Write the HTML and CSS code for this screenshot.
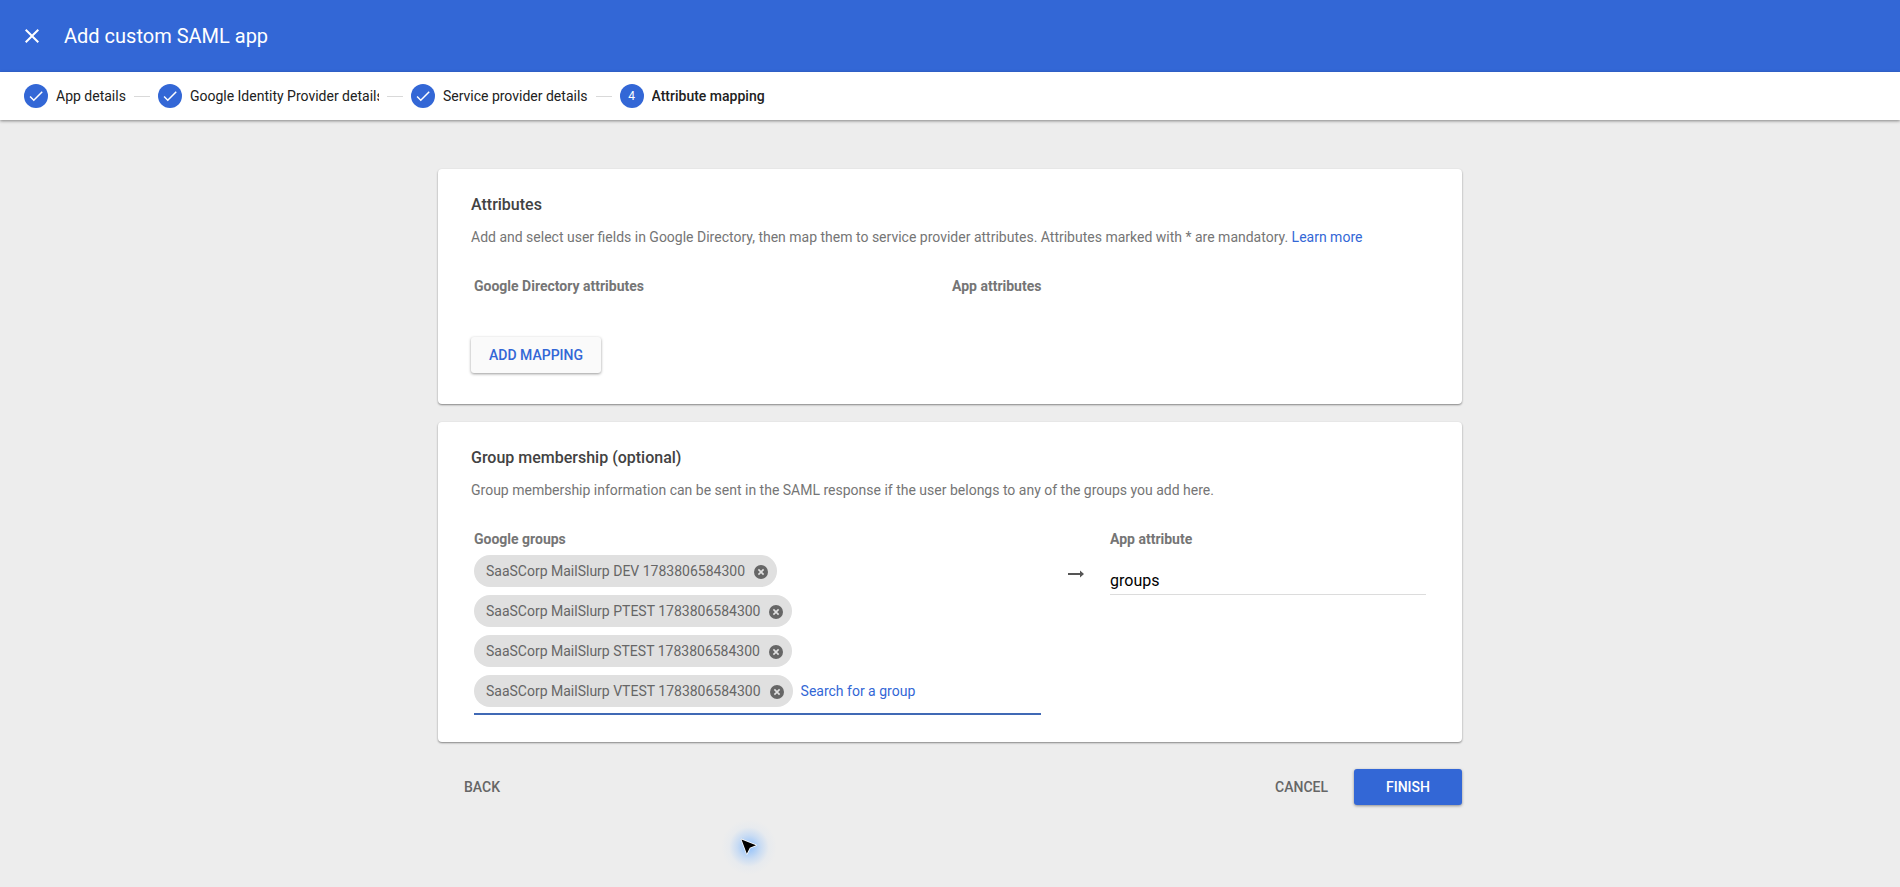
FILE: index.html
```html
<!DOCTYPE html>
<html lang="en">
<head>
    <meta charset="UTF-8">
    <meta name="viewport" content="width=device-width, initial-scale=1.0">
    <title>Add custom SAML app</title>
    <link rel="stylesheet" href="styles.css">
</head>
<body>
    <header class="topbar">
        <svg class="close" viewBox="0 0 24 24"><path d="M19 6.41L17.59 5 12 10.59 6.41 5 5 6.41 10.59 12 5 17.59 6.41 19 12 13.41 17.59 19 19 17.59 13.41 12z"/></svg>
        <h1>Add custom SAML app</h1>
    </header>

    <nav class="steps">
        <div class="step">
            <span class="circle"><svg viewBox="0 0 24 24"><path d="M9 16.17L4.83 12l-1.42 1.41L9 19 21 7l-1.41-1.41z"/></svg></span>
            <span class="label">App details</span>
        </div>
        <span class="line"></span>
        <div class="step">
            <span class="circle"><svg viewBox="0 0 24 24"><path d="M9 16.17L4.83 12l-1.42 1.41L9 19 21 7l-1.41-1.41z"/></svg></span>
            <span class="label">Google Identity Provider details</span>
        </div>
        <span class="line"></span>
        <div class="step">
            <span class="circle"><svg viewBox="0 0 24 24"><path d="M9 16.17L4.83 12l-1.42 1.41L9 19 21 7l-1.41-1.41z"/></svg></span>
            <span class="label">Service provider details</span>
        </div>
        <span class="line"></span>
        <div class="step active">
            <span class="circle">4</span>
            <span class="label">Attribute mapping</span>
        </div>
    </nav>

    <main class="container">
        <section class="card attributes">
            <h2>Attributes</h2>
            <p>Add and select user fields in Google Directory, then map them to service provider attributes. Attributes marked with * are mandatory. <a href="#">Learn more</a></p>
            <div class="columns">
                <h3>Google Directory attributes</h3>
                <h3>App attributes</h3>
            </div>
            <button class="btn btn-raised">ADD MAPPING</button>
        </section>

        <section class="card groups">
            <h2>Group membership (optional)</h2>
            <p>Group membership information can be sent in the SAML response if the user belongs to any of the groups you add here.</p>
            <div class="mapping">
                <div class="google-groups">
                    <h3>Google groups</h3>
                    <div class="chips">
                        <span class="chip">SaaSCorp MailSlurp DEV 1783806584300
                            <svg viewBox="0 0 14 14"><circle cx="7" cy="7" r="7"/><path d="M4.4 4.4l5.2 5.2M9.6 4.4L4.4 9.6"/></svg>
                        </span>
                        <span class="chip">SaaSCorp MailSlurp PTEST 1783806584300
                            <svg viewBox="0 0 14 14"><circle cx="7" cy="7" r="7"/><path d="M4.4 4.4l5.2 5.2M9.6 4.4L4.4 9.6"/></svg>
                        </span>
                        <span class="chip">SaaSCorp MailSlurp STEST 1783806584300
                            <svg viewBox="0 0 14 14"><circle cx="7" cy="7" r="7"/><path d="M4.4 4.4l5.2 5.2M9.6 4.4L4.4 9.6"/></svg>
                        </span>
                        <div class="last-row">
                            <span class="chip">SaaSCorp MailSlurp VTEST 1783806584300
                                <svg viewBox="0 0 14 14"><circle cx="7" cy="7" r="7"/><path d="M4.4 4.4l5.2 5.2M9.6 4.4L4.4 9.6"/></svg>
                            </span>
                            <span class="search">Search for a group</span>
                        </div>
                    </div>
                </div>
                <svg class="arrow" viewBox="0 0 16 8"><path d="M0 3h12V0.5L16 4l-4 3.5V5H0z"/></svg>
                <div class="app-attribute">
                    <h3>App attribute</h3>
                    <input type="text" value="groups">
                </div>
            </div>
        </section>

        <div class="actions">
            <button class="btn btn-flat">BACK</button>
            <button class="btn btn-flat cancel">CANCEL</button>
            <button class="btn btn-primary">FINISH</button>
        </div>
    </main>

    <!-- mouse pointer -->
    <div class="pointer">
        <svg viewBox="0 0 18 18"><path d="M1.5 1.5L16 7.3 9.8 9.8 6.8 15.8z"/></svg>
    </div>
</body>
</html>
```
FILE: styles.css
```css
* {
    box-sizing: border-box;
}
body {
    font-family: Roboto, Arial, sans-serif;
    font-size: 14px;
    margin: 0;
    height: 887px;
    overflow: hidden;
    background-color: #ededed;
    color: #212121;
}
h1, h2, h3, p {
    margin: 0;
}
.topbar {
    display: flex;
    align-items: center;
    height: 72px;
    padding-left: 20px;
    background: #3367d6;
    color: #fff;
}
.topbar h1 {
    margin-left: 20px;
    font-size: 20px;
    font-weight: 400;
}
.close {
    width: 24px;
    height: 24px;
    fill: #fff;
}
.steps {
    display: flex;
    align-items: center;
    gap: 8px;
    height: 48px;
    padding-left: 24px;
    background: #fff;
    box-shadow: 0 1px 3px rgba(0, 0, 0, 0.45);
}
.step {
    display: flex;
    align-items: center;
    gap: 8px;
}
.circle {
    display: flex;
    align-items: center;
    justify-content: center;
    width: 24px;
    height: 24px;
    border-radius: 50%;
    background: #3367d6;
    color: #fff;
    font-size: 12px;
}
.circle svg {
    width: 18px;
    height: 18px;
    fill: #fff;
}
.label {
    max-width: 189px;
    overflow: hidden;
    white-space: nowrap;
}
.active .label {
    font-weight: 500;
}
.line {
    width: 16px;
    height: 1px;
    background: #d9d9d9;
}
.container {
    width: 1024px;
    margin: 49px auto 0;
}
.card {
    padding: 25px 33px 0;
    background: #fff;
    border-radius: 4px;
    box-shadow: 0 1px 2px rgba(0, 0, 0, 0.45);
}
.attributes {
    height: 235px;
}
.groups {
    height: 320px;
    margin-top: 18px;
}
h2 {
    font-size: 16px;
    font-weight: 500;
    line-height: 22px;
    color: #424242;
}
.card p {
    margin-top: 11px;
    line-height: 20px;
    color: #757575;
}
a {
    color: #3367d6;
    text-decoration: none;
}
h3 {
    font-size: 14px;
    font-weight: 700;
    line-height: 20px;
    color: #757575;
}
.columns {
    display: grid;
    grid-template-columns: 478px 1fr;
    margin: 29px 3px 0;
}
.btn {
    height: 36px;
    padding: 0;
    border: none;
    border-radius: 3px;
    background: none;
    font-family: inherit;
    font-size: 14px;
    font-weight: 500;
}
.btn-raised {
    width: 130px;
    margin-top: 41px;
    background: #fafafa;
    color: #3367d6;
    box-shadow: 0 1px 3px rgba(0, 0, 0, 0.4);
}
.mapping {
    display: flex;
    margin: 29px 3px 0;
}
.google-groups {
    width: 567px;
}
.chips {
    display: flex;
    flex-direction: column;
    align-items: flex-start;
    gap: 8px;
    height: 160px;
    margin-top: 6px;
    border-bottom: 2px solid #4069b5;
}
.chip {
    display: flex;
    align-items: center;
    height: 32px;
    padding: 0 9px 0 12px;
    border-radius: 16px;
    background: #e0e0e0;
    color: #666;
}
.chip svg {
    width: 14px;
    height: 14px;
    margin: 1px 0 0 9px;
    fill: #666;
    stroke-width: 1.6;
}
.chip svg path {
    stroke: #e0e0e0;
}
.last-row {
    display: flex;
    align-items: center;
    gap: 8px;
}
.search {
    color: #3367d6;
}
.arrow {
    width: 16px;
    height: 8px;
    margin: 41px 26px 0 27px;
    fill: #555;
}
.app-attribute {
    width: 316px;
}
.app-attribute input {
    width: 100%;
    height: 30px;
    margin-top: 16px;
    padding: 2px 0 0;
    border: none;
    border-bottom: 1px solid #dcdcdc;
    font-family: inherit;
    font-size: 16px;
    color: #000;
}
.actions {
    display: flex;
    margin-top: 27px;
}
.btn-flat {
    padding: 0 26px;
    color: #666;
}
.cancel {
    margin-left: auto;
}
.btn-primary {
    width: 108px;
    background: #3367d6;
    color: #fff;
    box-shadow: 0 1px 3px rgba(0, 0, 0, 0.4);
}
.pointer {
    position: absolute;
    left: 721px;
    top: 819px;
    display: flex;
    align-items: center;
    justify-content: center;
    width: 56px;
    height: 56px;
    background: radial-gradient(circle, rgba(110, 175, 255, 0.75) 0, rgba(160, 200, 250, 0.45) 30%, rgba(200, 220, 245, 0.15) 50%, transparent 70%);
}
.pointer svg {
    width: 18px;
    height: 18px;
    fill: #000;
    stroke: #fff;
    stroke-width: 1.5;
    stroke-linejoin: round;
    paint-order: stroke;
}
```
